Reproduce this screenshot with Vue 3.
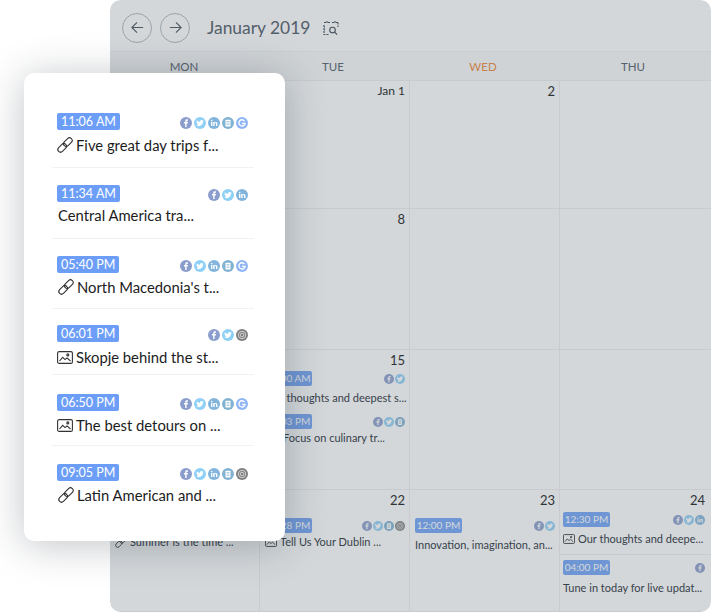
<script setup>
const L = 'link', I = 'image'
const popup = [
  { time: '11:06 AM', pad: 18, h: 73, gap: 6, ind: 0, kind: L, text: 'Five great day trips f...', soc: ['f', 't', 'in', 'b', 'g'] },
  { time: '11:34 AM', pad: 17, h: 71, gap: 4, ind: 1, kind: '', text: 'Central America tra...', soc: ['f', 't', 'in'] },
  { time: '05:40 PM', pad: 17, h: 70, gap: 5, ind: 1, kind: L, text: "North Macedonia's t...", soc: ['f', 't', 'in', 'b', 'g'] },
  { time: '06:01 PM', pad: 16, h: 66, gap: 6, ind: 0, kind: I, text: 'Skopje behind the st...', soc: ['f', 't', 'ig'] },
  { time: '06:50 PM', pad: 19, h: 71, gap: 5, ind: 0, kind: I, text: 'The best detours on ...', soc: ['f', 't', 'in', 'b', 'g'] },
  { time: '09:05 PM', pad: 18, h: 95, gap: 5, ind: 1, kind: L, text: 'Latin American and ...', soc: ['f', 't', 'in', 'b', 'ig'] }
]
const days = ['MON', 'TUE', 'WED', 'THU']
const weeks = [
  { h: 128, cells: [{}, { n: 'Jan 1' }, { n: '2' }, {}] },
  { h: 141, cells: [{}, { n: '8' }, {}, {}] },
  { h: 140, cells: [{}, {
    n: '15', ev: [
      { top: 2, gap: 4, after: 9, ind: 0, time: '09:00 AM', text: 'Our thoughts and deepest s...', soc: ['f', 't'] },
      { top: 0, gap: 1, after: 0, ind: 3, time: '01:03 PM', kind: L, text: 'Focus on culinary tr...', soc: ['f', 't', 'b'] }
    ]
  }, {}, {}] },
  { h: 122, cells: [
    { ev: [{ top: 9, gap: 1, after: 0, ind: 0, time: '10:15 AM', kind: L, text: 'Summer is the time ...', soc: ['f', 't'] }] },
    { n: '22', ev: [{ top: 9, gap: 1, after: 0, ind: 0, time: '03:28 PM', kind: I, text: 'Tell Us Your Dublin ...', soc: ['f', 't', 'b', 'ig'] }] },
    { n: '23', ev: [{ top: 9, gap: 4, after: 0, ind: 0, time: '12:00 PM', text: 'Innovation, imagination, an...', soc: ['f', 't'] }] },
    { n: '24', ev: [
      { top: 3, gap: 4, after: 8, ind: 0, time: '12:30 PM', kind: I, text: 'Our thoughts and deepe...', soc: ['f', 't', 'in'], line: true },
      { top: 0, gap: 5, after: 0, ind: 0, time: '04:00 PM', text: 'Tune in today for live updat...', soc: ['f'] }
    ] }
  ] }
]
</script>

<template>
  <div class="page">
    <svg class="defs" aria-hidden="true">
      <defs>
        <symbol id="s-f" viewBox="0 0 24 24">
          <circle cx="12" cy="12" r="12" fill="#8a9dcc" />
          <path fill="#fff" d="M13.2 20v-7h2.4l.4-2.8h-2.8V8.600c0-.8.3-1.300 1.400-1.300H16V4.800c-.3 0-1.100-.1-2-.1-2.100 0-3.600 1.300-3.600 3.600v1.900H8V13h2.400v7z" />
        </symbol>
        <symbol id="s-t" viewBox="0 0 24 24">
          <circle cx="12" cy="12" r="12" fill="#8fd0f7" />
          <path fill="#fff" transform="translate(3 3) scale(.75)" d="M22 5.900c-.7.300-1.500.5-2.400.6.900-.5 1.500-1.300 1.800-2.300-.8.500-1.700.8-2.600 1a4.100 4.100 0 0 0-7 3.700A11.600 11.600 0 0 1 3.400 4.700a4.100 4.100 0 0 0 1.300 5.500c-.7 0-1.300-.2-1.900-.5 0 2 1.400 3.700 3.300 4.100-.6.200-1.200.2-1.900.1.500 1.600 2 2.800 3.800 2.800A8.200 8.200 0 0 1 2 18.400 11.600 11.600 0 0 0 20 8.100c.8-.6 1.500-1.300 2-2.200z" />
        </symbol>
        <symbol id="s-in" viewBox="0 0 24 24">
          <circle cx="12" cy="12" r="12" fill="#82b4dc" />
          <path fill="#fff" d="M6 10h2.800v8H6zM7.400 5.600a1.600 1.600 0 1 1 0 3.200 1.600 1.600 0 0 1 0-3.200zM10.400 10H13v1.200c.5-.8 1.400-1.400 2.700-1.400 2.400 0 3.100 1.500 3.100 3.900V18H16v-3.800c0-1.100-.3-2-1.300-2-1.200 0-1.500.9-1.500 2V18h-2.800z" />
        </symbol>
        <symbol id="s-b" viewBox="0 0 24 24">
          <circle cx="12" cy="12" r="12" fill="#80b2d2" />
          <rect x="7" y="5.500" width="10" height="13.500" rx="1" fill="#fff" />
          <path stroke="#80b2d2" stroke-width="1.200" d="M9 9h6M9 12h6M9 15h6" />
        </symbol>
        <symbol id="s-g" viewBox="0 0 24 24">
          <circle cx="12" cy="12" r="12" fill="#8fb5f7" />
          <path fill="none" stroke="#fff" stroke-width="2.600" d="M17 8a6.200 6.200 0 1 0 1.200 4.600H12" />
        </symbol>
        <symbol id="s-ig" viewBox="0 0 24 24">
          <circle cx="12" cy="12" r="12" fill="#7d7d7d" />
          <circle cx="12" cy="12" r="7.500" fill="none" stroke="#ddd" stroke-width="1.800" />
          <circle cx="12" cy="12" r="3.600" fill="none" stroke="#ddd" stroke-width="1.800" />
        </symbol>
        <symbol id="s-link" viewBox="0 0 16 16">
          <g fill="none" stroke="currentColor" stroke-width="1.100" transform="rotate(-45 8 8)">
            <rect x="-1" y="5.300" width="10" height="5.400" rx="2.700" />
            <rect x="7" y="5.300" width="10" height="5.400" rx="2.700" />
          </g>
        </symbol>
        <symbol id="s-image" viewBox="0 0 16 13">
          <g fill="none" stroke="currentColor" stroke-width="1.100">
            <rect x=".6" y=".6" width="14.800" height="11.800" rx="1.500" />
            <path d="M2.500 10l3.200-3.600 2.300 2.200 2-1.700 3.500 3.100" />
            <circle cx="10.800" cy="3.900" r="1" />
          </g>
        </symbol>
      </defs>
    </svg>

    <section class="calendar">
      <header class="top">
        <button class="round">
          <svg viewBox="0 0 16 16"><path d="M14 8H2M7.500 2.500L2 8l5.500 5.500" /></svg>
        </button>
        <button class="round">
          <svg viewBox="0 0 16 16"><path d="M2 8h12M8.500 2.500L14 8l-5.500 5.500" /></svg>
        </button>
        <h1 class="month">January 2019</h1>
        <svg class="finder" viewBox="0 0 16 16">
          <path d="M1 5v9.500h5M1 2.500h2M5 2.500h2M9 2.500h2M13 2.500h2M15 2.500V7M4 1v3M12 1v3M1 7h1M1 10h1" stroke-dasharray="2 1" />
          <circle cx="9.500" cy="10" r="2.800" />
          <path d="M11.600 12.100l2.600 2.600" />
        </svg>
      </header>
      <div class="weekdays">
        <div v-for="d in days" :key="d" class="weekday" :class="{ today: d === 'WED' }">{{ d }}</div>
      </div>
      <div v-for="(w, wi) in weeks" :key="wi" class="week" :style="{ height: w.h + 'px' }">
        <div v-for="(c, ci) in w.cells" :key="ci" class="cell">
          <div class="num" :class="{ label: c.n && c.n.length > 2 }">{{ c.n }}</div>
          <div
            v-for="e in c.ev"
            :key="e.time"
            class="ev"
            :class="{ ruled: e.line }"
            :style="{ marginTop: e.top + 'px', paddingBottom: e.after + 'px' }"
          >
            <div class="ev-head">
              <span class="pill small">{{ e.time }}</span>
              <span class="socs small">
                <svg v-for="s in e.soc" :key="s" class="soc"><use :href="'#s-' + s" /></svg>
              </span>
            </div>
            <div class="ev-text" :style="{ marginTop: e.gap + 'px', gap: 3 + e.ind + 'px' }">
              <svg v-if="e.kind" class="kind" :class="e.kind"><use :href="'#s-' + e.kind" /></svg>
              <span>{{ e.text }}</span>
            </div>
          </div>
        </div>
      </div>
      <div class="dim"></div>
    </section>

    <aside class="popup">
      <div
        v-for="p in popup"
        :key="p.time"
        class="item"
        :style="{ height: p.h + 'px', paddingTop: p.pad + 'px' }"
      >
        <div class="item-head">
          <span class="pill">{{ p.time }}</span>
          <span class="socs">
            <svg v-for="s in p.soc" :key="s" class="soc"><use :href="'#s-' + s" /></svg>
          </span>
        </div>
        <div class="item-text" :style="{ marginTop: p.gap + 'px', paddingLeft: p.ind + 'px' }">
          <svg v-if="p.kind" class="kind" :class="p.kind"><use :href="'#s-' + p.kind" /></svg>
          <span>{{ p.text }}</span>
        </div>
      </div>
    </aside>
  </div>
</template>

<style scoped>
.page {
  position: relative;
  width: 711px;
  height: 613px;
  overflow: hidden;
  background: #fff;
  font-family: Lato, "Liberation Sans", sans-serif;
}
.defs {
  position: absolute;
  width: 0;
  height: 0;
}
.calendar {
  position: relative;
  box-sizing: border-box;
  margin-left: 110px;
  width: 601px;
  height: 612px;
  background: #fff;
  border-radius: 10px;
  overflow: hidden;
}
.dim {
  position: absolute;
  inset: 0;
  background: rgba(35, 55, 70, 0.2);
  border-radius: 10px;
  pointer-events: none;
}
.top {
  display: flex;
  align-items: center;
  height: 52px;
  padding: 4px 0 0 12px;
  box-sizing: border-box;
  border-bottom: 1px solid #f2f3f4;
}
.round {
  display: flex;
  align-items: center;
  justify-content: center;
  width: 30px;
  height: 30px;
  padding: 0;
  margin-right: 8px;
  border: 1px solid #b9bfc5;
  border-radius: 50%;
  background: transparent;
}
.round svg {
  width: 15px;
  height: 15px;
  fill: none;
  stroke: #5a626a;
  stroke-width: 1.200;
}
.month {
  margin: 0 0 0 9px;
  font-size: 17.400px;
  font-weight: 400;
  color: #5f6973;
}
.finder {
  width: 16px;
  height: 16px;
  margin-left: 13px;
  fill: none;
  stroke: #4f5963;
  stroke-width: 1.100;
}
.weekdays {
  display: grid;
  grid-template-columns: 148px 150px 150px 150px;
  height: 29px;
  background: #fafbfb;
  border-bottom: 1px solid #f0f1f2;
  box-sizing: border-box;
}
.weekday {
  padding-top: 8px;
  text-align: center;
  font-size: 11.500px;
  line-height: 14px;
  color: #636d77;
}
.weekday.today {
  color: #f2954a;
}
.week {
  display: grid;
  grid-template-columns: 150px 150px 150px 151px;
  box-sizing: border-box;
  border-bottom: 1px solid #f0f1f2;
}
.cell {
  box-sizing: border-box;
  min-width: 0;
  padding: 0 4px 0 5px;
  border-right: 1px solid #f0f1f2;
}
.cell:last-child {
  padding: 0 6px 0 3px;
  border-right: 0;
}
.num {
  height: 19px;
  text-align: right;
  font-size: 13px;
  line-height: 20px;
  color: #333;
}
.num.label {
  font-size: 12px;
}
.ev.ruled {
  margin-right: -6px;
  margin-left: -3px;
  padding-left: 3px;
  padding-right: 6px;
  margin-bottom: 5px;
  border-bottom: 1px solid #f0f1f2;
}
.ev-head,
.item-head {
  display: flex;
  align-items: center;
  justify-content: space-between;
}
.pill {
  box-sizing: border-box;
  height: 17px;
  padding: 0 4px;
  border-radius: 2px;
  background: #6c9ef8;
  color: #fff;
  font-size: 12.500px;
  line-height: 17px;
  white-space: nowrap;
}
.pill.small {
  height: 15px;
  width: 47px;
  padding: 0;
  text-align: center;
  background: #82aef8;
  font-size: 10px;
  line-height: 15px;
}
.socs {
  display: flex;
  gap: 2px;
  margin-top: 3px;
}
.socs.small {
  gap: 0;
  margin-top: 0;
}
.soc {
  width: 12px;
  height: 12px;
}
.small .soc {
  width: 10px;
  height: 10px;
  margin-left: 1px;
  opacity: 0.85;
}
.ev-text {
  display: flex;
  align-items: center;
  gap: 3px;
  font-size: 11px;
  line-height: 15px;
  color: #3e454c;
  white-space: nowrap;
}
.item {
  box-sizing: border-box;
  margin: 0 31px 0 28px;
  padding-left: 5px;
  padding-right: 6px;
  border-bottom: 1px solid #f1f2f3;
}
.item:last-child {
  border-bottom: 0;
}
.item-text {
  display: flex;
  align-items: center;
  gap: 3px;
  font-size: 14.800px;
  line-height: 18px;
  color: #1c1c1c;
  white-space: nowrap;
}
.kind {
  flex: none;
  color: #333;
}
.kind.link {
  width: 16px;
  height: 16px;
}
.kind.image {
  width: 16px;
  height: 13px;
}
.ev-text .kind.link {
  width: 12px;
  height: 12px;
}
.ev-text .kind.image {
  width: 12px;
  height: 10px;
}
.popup {
  position: absolute;
  left: 24px;
  top: 73px;
  box-sizing: border-box;
  width: 261px;
  height: 468px;
  padding-top: 22px;
  background: #fff;
  border-radius: 10px;
  box-shadow: 0 4px 40px rgba(30, 40, 50, 0.28);
}
</style>
